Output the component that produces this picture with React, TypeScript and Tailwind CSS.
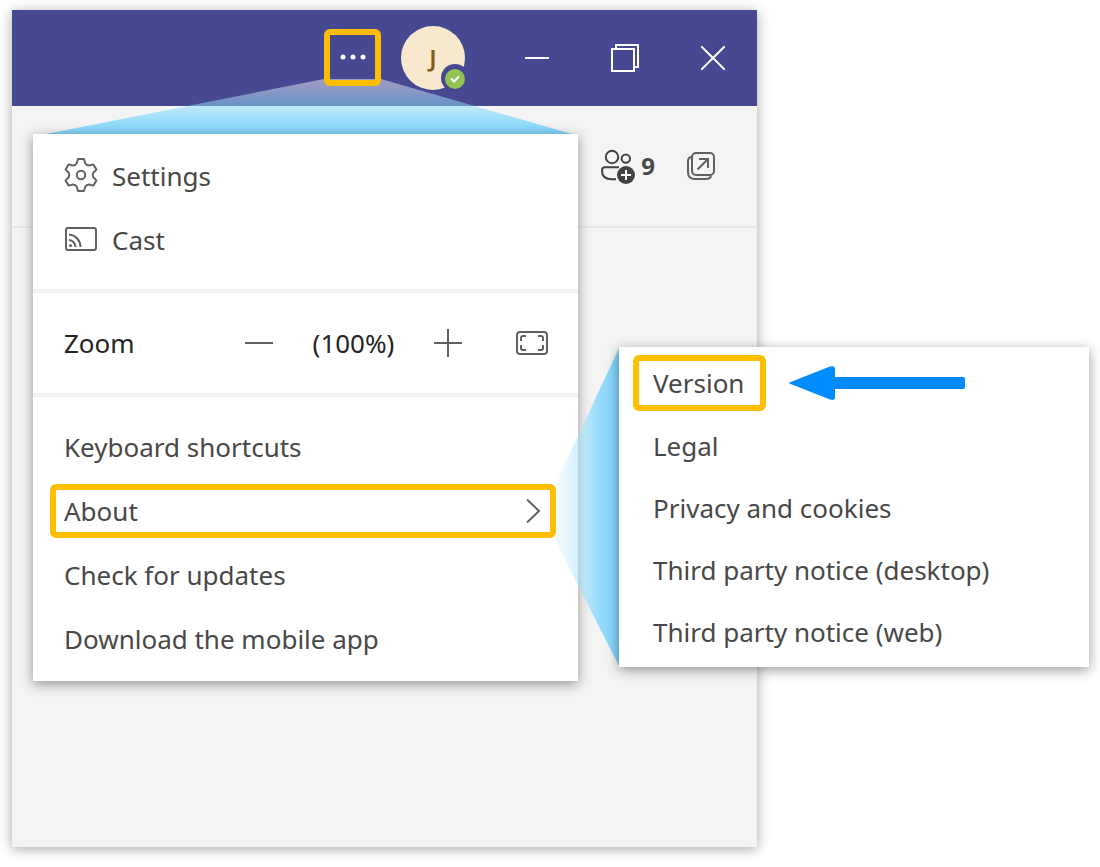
import React from "react";

const GearIcon = () => (
  <svg width="34" height="36" viewBox="-17 -17 34 36" fill="none" stroke="#616161" strokeWidth="2" strokeLinejoin="round">
    <path d="M-3 -16H3L4.2 -11.8Q5.5 -9.5 8.1 -9.5L12.4 -10.6L15.4 -5.4L12.3 -2.3Q11 0 12.3 2.3L15.4 5.4L12.4 10.6L8.1 9.5Q5.5 9.5 4.2 11.8L3 16H-3L-4.2 11.8Q-5.5 9.5 -8.1 9.5L-12.4 10.6L-15.4 5.4L-12.3 2.3Q-11 0 -12.3 -2.3L-15.4 -5.4L-12.4 -10.6L-8.1 -9.5Q-5.5 -9.5 -4.2 -11.8Z" />
    <circle r="4.2" />
  </svg>
);

const CastIcon = () => (
  <svg width="34" height="26" viewBox="0 1 34 26" fill="none" stroke="#616161" strokeWidth="2">
    <rect x="2" y="2" width="30" height="22" rx="2" />
    <path d="M5 8.5A12.5 12.5 0 0 1 16.5 21M5 14A7 7 0 0 1 11.5 21" />
    <circle cx="6.5" cy="19.5" r="1.5" fill="#616161" stroke="none" />
  </svg>
);

const FullscreenIcon = () => (
  <svg width="32" height="24" viewBox="0 0 32 24" fill="none" stroke="#616161" strokeWidth="2">
    <rect x="1" y="1" width="30" height="22" rx="3" />
    <path d="M5 10V7Q5 5 7 5H10M22 5H25Q27 5 27 7V10M27 14V17Q27 19 25 19H22M10 19H7Q5 19 5 17V14" />
  </svg>
);

const PeopleAddIcon = () => (
  <svg width="36" height="36" viewBox="0 0 36 36" fill="none" stroke="#424242" strokeWidth="2">
    <circle cx="12" cy="9" r="6.2" />
    <circle cx="25.8" cy="10.6" r="4.2" />
    <path d="M19 19.2H5Q2 19.2 2 22V23C2 28.5 6 31.3 12 31.3H16" />
    <circle cx="26" cy="27" r="9" fill="#424242" stroke="none" />
    <path d="M26 22V32M21 27H31" stroke="#fff" />
  </svg>
);

const PopOutIcon = () => (
  <svg width="28" height="28" viewBox="0 0 28 28" fill="none" stroke="#616161" strokeWidth="2">
    <rect x="5" y="1" width="22" height="22" rx="4" />
    <path d="M4.500 4.800Q1 5.500 1 9.500V20Q1 27 8 27H19Q23.500 27 24 23.500M10.500 17.500L21 7M12 7H21V16" />
  </svg>
);

const ArrowLeft = () => (
  <svg width="176" height="34" viewBox="0 0 176 34" fill="#008cff">
    <path d="M1 16.200L41 .6Q46 -1 46 3V11H174Q176 11 176 13V21Q176 23 174 23H46V31Q46 35 41 33.400L1 17.800Q-1 17 1 16.200Z" />
  </svg>
);

// highlights the spot a panel opens from, fading out towards it
const MoreBeam = () => (
  <svg className="absolute top-[69px] right-[185px]" width="526" height="55" viewBox="0 0 526 55">
    <defs>
      <linearGradient id="more-beam" x1="0" y1="0" x2="0" y2="1">
        <stop offset="0" stopColor="#fff0f5" stopOpacity="0.5" />
        <stop offset="0.5" stopColor="#87defd" stopOpacity="0.5" />
        <stop offset="0.75" stopColor="#84d9fc" stopOpacity="0.8" />
        <stop offset="1" stopColor="#80d4fa" />
      </linearGradient>
    </defs>
    <path d="M278 0H335L526 55H0Z" fill="url(#more-beam)" />
  </svg>
);

const AboutBeam = () => (
  <svg className="absolute top-[338px] right-[138px]" width="64" height="318" viewBox="0 0 64 318">
    <defs>
      <linearGradient id="about-beam">
        <stop offset="0" stopColor="#bdeafd" stopOpacity="0.1" />
        <stop offset="0.4" stopColor="#a0e0fb" stopOpacity="0.55" />
        <stop offset="0.7" stopColor="#8ad8fb" stopOpacity="0.9" />
        <stop offset="1" stopColor="#80d4fa" />
      </linearGradient>
    </defs>
    <path d="M0 137L64 0V318L0 192Z" fill="url(#about-beam)" />
  </svg>
);

const highlight = "border-[6px] border-[#ffbf00] rounded-md";

const TitleBar = () => (
  <header className="h-24 flex items-center justify-end bg-[#464891] text-white">
    <button aria-label="Settings and more" className={`relative z-10 w-[57px] h-[57px] mb-0.5 flex items-center justify-center ${highlight}`}>
      <svg width="26" height="6" viewBox="0 0 26 6" fill="#fff">
        <circle cx="3" cy="3" r="2.500" />
        <circle cx="13" cy="3" r="2.500" />
        <circle cx="23" cy="3" r="2.500" />
      </svg>
    </button>
    <button aria-label="Account" className="relative ml-5 mr-7 w-16 h-16 rounded-full bg-[#f8e9ce] text-2xl font-semibold text-[#835c18]">
      J
      <svg className="absolute -right-1 -bottom-0.5" width="28" height="28" viewBox="0 0 28 28">
        <circle cx="14" cy="14" r="14" fill="#464891" />
        <circle cx="14" cy="15" r="10" fill="#92c353" />
        <path d="M10.500 15L13 17.500L17.500 13" fill="none" stroke="#fff" strokeWidth="2" strokeLinecap="round" />
      </svg>
    </button>
    <button aria-label="Minimize" className="w-[88px] h-full flex items-center justify-center">
      <svg width="24" height="2" viewBox="0 0 24 2">
        <path d="M0 1H24" stroke="#fff" strokeWidth="2" />
      </svg>
    </button>
    <button aria-label="Restore" className="w-[88px] h-full flex items-center justify-center">
      <svg width="28" height="28" viewBox="0 0 28 28" fill="none" stroke="#fff" strokeWidth="2">
        <path d="M1 5H23V27H1ZM5 5V1H27V23H23" />
      </svg>
    </button>
    <button aria-label="Close" className="w-[88px] h-full flex items-center justify-center">
      <svg width="24" height="24" viewBox="0 0 24 24" stroke="#fff" strokeWidth="2">
        <path d="M0 0L24 24M24 0L0 24" />
      </svg>
    </button>
  </header>
);

const menuItem = "w-full h-16 pl-[31px] pr-8 flex items-center text-left";

const Menu = () => (
  <div className="absolute top-[124px] right-[179px] w-[545px] bg-white shadow-[0_3px_12px_rgba(0,0,0,0.4)]">
    <div className="pt-2.5 pb-[17px]">
      <button className={`${menuItem} gap-3.5`}>
        <GearIcon />
        Settings
      </button>
      <button className={`${menuItem} gap-3.5`}>
        <CastIcon />
        Cast
      </button>
    </div>
    <div className="h-[108px] pl-[31px] pr-[30px] flex items-center border-y-4 border-[#f3f2f1] text-[#242424]">
      <span className="flex-1">Zoom</span>
      <button aria-label="Zoom out">
        <svg width="28" height="28" viewBox="0 0 28 28" stroke="#616161" strokeWidth="2">
          <path d="M0 14H28" />
        </svg>
      </button>
      <span className="w-[161px] text-center">(100%)</span>
      <button aria-label="Zoom in">
        <svg width="28" height="28" viewBox="0 0 28 28" stroke="#616161" strokeWidth="2">
          <path d="M0 14H28M14 0V28" />
        </svg>
      </button>
      <button aria-label="Full screen" className="ml-[54px]">
        <FullscreenIcon />
      </button>
    </div>
    <div className="pt-[18px] pb-2.5">
      <button className={menuItem}>Keyboard shortcuts</button>
      <div className="h-16 pl-[17px] pr-[22px] flex items-center">
        <button className={`w-full h-[54px] px-2 flex items-center justify-between ${highlight}`}>
          About
          <svg width="16" height="24" viewBox="0 0 16 24" fill="none" stroke="#616161" strokeWidth="2">
            <path d="M1 0.500L13 12L1 23.500" />
          </svg>
        </button>
      </div>
      <button className={menuItem}>Check for updates</button>
      <button className={menuItem}>Download the mobile app</button>
    </div>
  </div>
);

const aboutItems = ["Legal", "Privacy and cookies", "Third party notice (desktop)", "Third party notice (web)"];

const AboutMenu = () => (
  <div className="absolute top-[337px] right-[-332px] w-[470px] pt-2 pb-1 bg-white shadow-[0_3px_12px_rgba(0,0,0,0.4)]">
    <div className="mb-1 pl-3.5 flex items-center gap-[23px]">
      <button className={`w-[133px] h-14 pl-3.5 text-left ${highlight}`}>Version</button>
      <ArrowLeft />
    </div>
    {aboutItems.map((item) => (
      <button key={item} className="w-full h-[62px] pl-[34px] block text-left">
        {item}
      </button>
    ))}
  </div>
);

const App: React.FC = () => {
  return (
    <div className="pt-2.5 pb-5 pl-3 pr-[343px] bg-white font-['Noto_Sans',sans-serif] text-[26px] leading-9 text-[#484848]">
      <main className="relative min-h-[837px] bg-[#f4f4f4] shadow-[0_2px_12px_rgba(0,0,0,0.35)]">
        <TitleBar />
        <div className="h-[122px] pr-[42px] flex items-center justify-end border-b-2 border-[#e9e9e9]">
          <button className="flex items-center gap-[5px] text-2xl font-bold">
            <PeopleAddIcon />9
          </button>
          <button aria-label="Pop out" className="ml-8">
            <PopOutIcon />
          </button>
        </div>
        <MoreBeam />
        <Menu />
        <AboutBeam />
        <AboutMenu />
      </main>
    </div>
  );
};

export default App;
